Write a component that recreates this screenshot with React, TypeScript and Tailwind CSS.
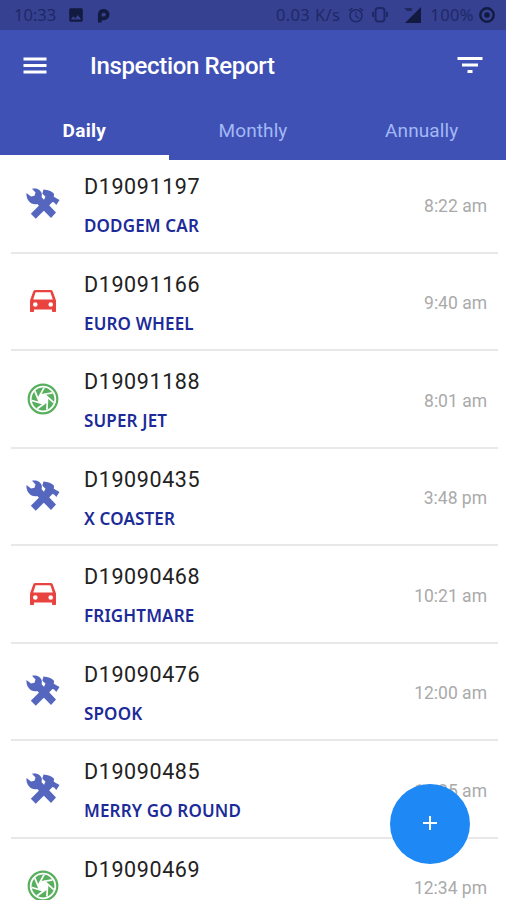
import type { ReactNode } from "react";
import { MdAlarm, MdImage } from "react-icons/md";

type Kind = "tools" | "car" | "wheel";

interface Report {
  id: string;
  name?: string;
  time: string;
  kind: Kind;
}

const reports: Report[] = [
  { id: "D19091197", name: "DODGEM CAR", time: "8:22 am", kind: "tools" },
  { id: "D19091166", name: "EURO WHEEL", time: "9:40 am", kind: "car" },
  { id: "D19091188", name: "SUPER JET", time: "8:01 am", kind: "wheel" },
  { id: "D19090435", name: "X COASTER", time: "3:48 pm", kind: "tools" },
  { id: "D19090468", name: "FRIGHTMARE", time: "10:21 am", kind: "car" },
  { id: "D19090476", name: "SPOOK", time: "12:00 am", kind: "tools" },
  { id: "D19090485", name: "MERRY GO ROUND", time: "11:35 am", kind: "tools" },
  { id: "D19090469", time: "12:34 pm", kind: "wheel" },
];

const tabs = ["Daily", "Monthly", "Annually"];

const bladeAngles = [0, 51.4, 102.9, 154.3, 205.7, 257.1, 308.6];

// wrench and hammer, crossed
function ToolsIcon() {
  return (
    <svg viewBox="0 0 38 38" className="h-[38px] w-[38px] text-[#5566bf]" fill="currentColor">
      <path d="M2.500 8L7 11.500L10.500 10.800L11.500 7.500L8 3.800C13 2.300 17.700 5.300 17.900 9.500L17.600 12.300L32 27.500L27 33L13.300 19C7.500 20.500 1.800 15.500 2.500 8Z" />
      <path d="M23.500 17L9.300 31.300" stroke="currentColor" strokeWidth="7" />
      <path d="M18.300 8.500L19.500 4.500Q26.500 4.800 30 8.800L29.800 11.800L35.500 15L32.300 20Q30 16.500 28.500 17L25.500 20L20 14.500L21.500 11.800Z" />
    </svg>
  );
}

function CarIcon() {
  return (
    <svg viewBox="0 0 28 24" className="h-6 w-7 text-[#e8433f]" fill="currentColor">
      <path
        fillRule="evenodd"
        d="M6.500 1h15c1.200 0 2 .6 2.300 1.600L27 11.500V22c0 .7-.4 1-1 1h-2c-.7 0-1-.4-1-1v-1.500H5V22c0 .6-.3 1-1 1H2c-.6 0-1-.3-1-1V11.500L4.200 2.600C4.500 1.600 5.300 1 6.500 1zM6.600 3.200L4.200 10.500h19.600L21.400 3.200zM6.300 13.200a2.300 2.300 0 1 0 0 4.600a2.300 2.300 0 1 0 0-4.600zM21.700 13.200a2.300 2.300 0 1 0 0 4.600a2.300 2.300 0 1 0 0-4.600z"
      />
    </svg>
  );
}

// ring with shutter-like blades around an open centre
function WheelIcon() {
  return (
    <svg viewBox="0 0 32 32" className="h-8 w-8 text-[#58b05e]">
      <circle cx="16" cy="16" r="14.300" fill="none" stroke="currentColor" strokeWidth="2.200" />
      <circle cx="16" cy="16" r="11.400" fill="currentColor" />
      <circle cx="16" cy="16" r="4.300" fill="white" />
      {bladeAngles.map((angle) => (
        <path key={angle} d="M13 12L25.500 9.800" stroke="white" strokeWidth="1.700" transform={`rotate(${angle} 16 16)`} />
      ))}
    </svg>
  );
}

const icons: Record<Kind, ReactNode> = {
  tools: <ToolsIcon />,
  car: <CarIcon />,
  wheel: <WheelIcon />,
};

function StatusBar() {
  return (
    <div className="flex h-[30px] items-center bg-[#364191] pl-[14px] pr-[11px] font-['Noto_Sans',sans-serif] text-[16.5px] text-[#1f2967]">
      <span>10:33</span>
      <MdImage className="ml-[11px] h-[18px] w-[18px] text-[#121a40]" />
      <svg viewBox="0 0 14 16" className="ml-[12px] h-[15px] w-[13px] text-[#121a40]" fill="none" stroke="currentColor" strokeWidth="4">
        <path d="M3 15.500V7C3 4 5 3 7.500 3a4 4 0 0 1 0 8H3" />
      </svg>
      <span className="ml-auto tracking-[0.4px]">0.03 K/s</span>
      <MdAlarm className="ml-[7px] h-[18px] w-[18px]" />
      <svg viewBox="0 0 18 18" className="ml-[6px] h-[18px] w-[18px]" fill="none" stroke="currentColor" strokeWidth="2">
        <rect x="4.500" y="2" width="9" height="13.500" rx="3" />
        <path d="M2 6v5M16 6v5" />
      </svg>
      <svg viewBox="0 0 18 16" className="ml-[14px] h-4 w-[18px] text-[#121a40]" fill="currentColor">
        <path d="M18 0v16H2z" />
        <path d="M1 1h8v3H4z" opacity="0.6" />
      </svg>
      <span className="ml-[9px] tracking-[0.4px]">100%</span>
      <svg viewBox="0 0 16 16" className="ml-[5px] h-4 w-4 text-[#121a40]">
        <circle cx="8" cy="8" r="6.700" fill="none" stroke="currentColor" strokeWidth="2.400" />
        <circle cx="8" cy="8" r="2.800" fill="currentColor" />
      </svg>
    </div>
  );
}

export default function App() {
  return (
    <div className="relative flex h-[900px] w-[506px] flex-col overflow-hidden bg-white font-[Roboto,sans-serif]">
      <header className="relative z-10 shrink-0 bg-[#3f51b5]">
        <StatusBar />
        <div className="flex h-[72px] items-center pl-[23px] pr-[23px] text-white">
          <svg viewBox="0 0 24 18" className="h-[18px] w-6" stroke="currentColor" strokeWidth="2.800">
            <path d="M0.500 2h23M0.500 8.500h23M0.500 15h23" />
          </svg>
          <h1 className="ml-[43px] text-[24px] font-medium tracking-[-0.35px]">Inspection Report</h1>
          <svg viewBox="0 0 26 18" className="-mt-[2px] ml-auto h-[18px] w-[26px]" stroke="currentColor" strokeWidth="2.800">
            <path d="M0.500 2.500h25M5 9h16M10.500 15.500h5" />
          </svg>
        </div>
        <nav className="flex h-[58px]">
          {tabs.map((tab, idx) => (
            <button
              key={tab}
              className={`flex flex-1 items-center justify-center border-b-[5px] pt-[6px] text-[19px] ${
                idx === 0
                  ? "border-white font-bold tracking-[0.3px] text-white"
                  : "border-transparent tracking-[0.1px] text-[#a3b8f5]"
              }`}
            >
              {tab}
            </button>
          ))}
        </nav>
      </header>

      <ul className="-mt-[4px] pl-[11px] pr-2">
        {reports.map((report) => (
          <li key={report.id} className="flex h-[97.5px] items-center border-b-2 border-[#e8e8e8] pr-[11px]">
            <div className="flex w-[63px] justify-center">{icons[report.kind]}</div>
            <div className="ml-[10px] pt-[4px]">
              <p className="text-[21.5px] leading-[28px] tracking-[0.6px] text-[#222]">{report.id}</p>
              <p className="mt-[13px] h-6 font-['Noto_Sans',sans-serif] text-[17px] font-semibold leading-6 tracking-[0.15px] text-[#1c2b99]">
                {report.name}
              </p>
            </div>
            <span className="ml-auto pt-[4px] text-[17.5px] text-[#aaa]">{report.time}</span>
          </li>
        ))}
      </ul>

      <button className="absolute left-[390px] top-[784px] z-20 flex h-20 w-20 items-center justify-center rounded-full bg-[#1e88f5]">
        <svg viewBox="0 0 14 14" className="h-[14px] w-[14px] -translate-y-px text-white" stroke="currentColor" strokeWidth="2">
          <path d="M7 0v14M0 7h14" />
        </svg>
      </button>
    </div>
  );
}
